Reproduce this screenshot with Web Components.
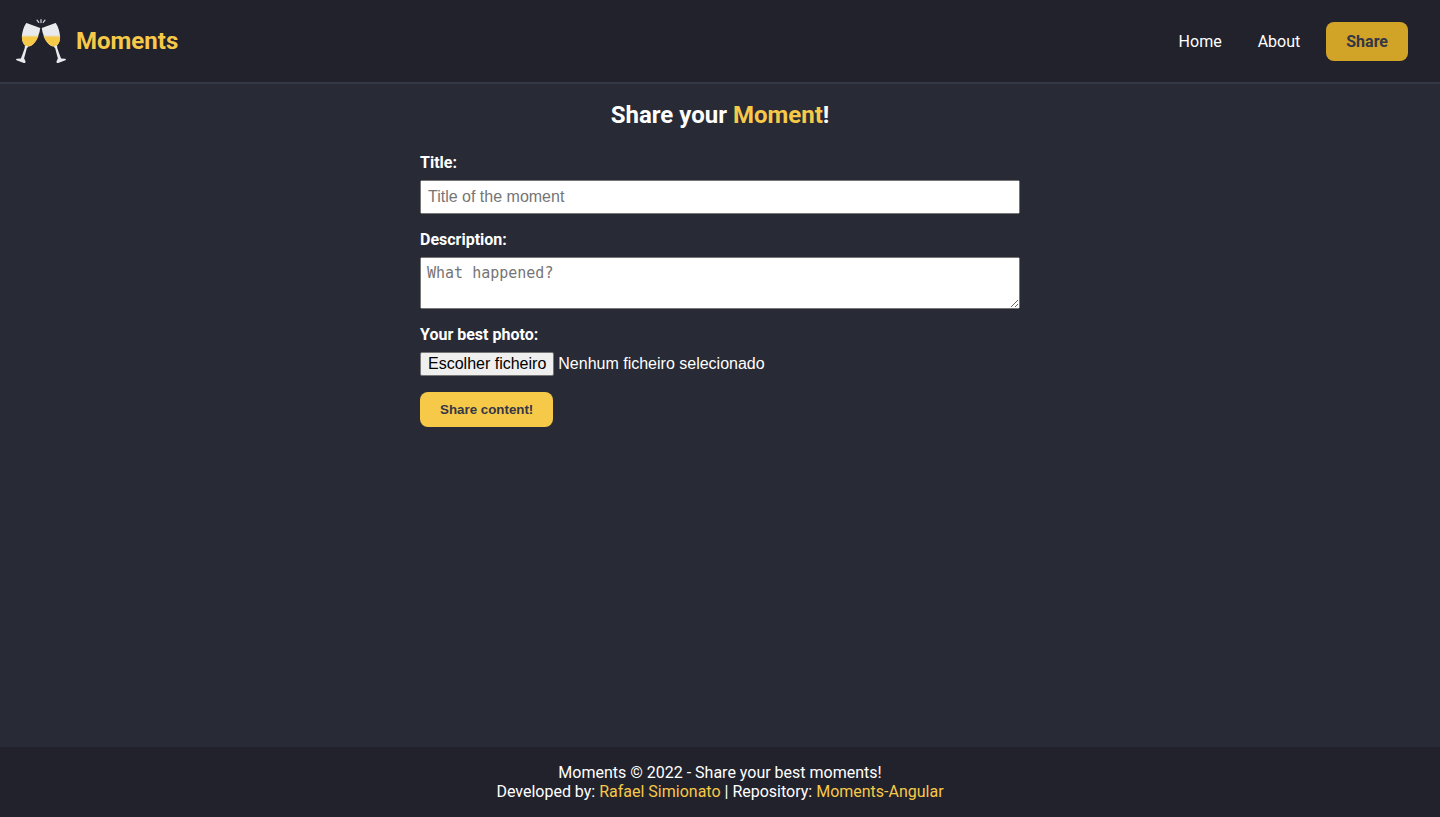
<!DOCTYPE html>
<html lang="en">
<head>
<meta charset="utf-8">
<meta name="viewport" content="width=device-width, initial-scale=1">
<title>Moments</title>
<style>
  :root {
    --bg: #282a35;
    --bar: #22222c;
    --line: #343746;
    --accent: #f7c948;
    --accent-dark: #d1a427;
    --ink: #343746;
    --text: #ffffff;
  }
  body {
    margin: 0;
    background: var(--bg);
    color: var(--text);
    font: 16px/19px Roboto, sans-serif;
  }
</style>
</head>
<body>
<moments-app></moments-app>

<template id="app-template">
  <style>
    :host { display: flex; flex-direction: column; min-height: 100vh; }
    main { flex: 1; padding: 16px; }
    h1 { margin: 0 0 23px; font-size: 24px; line-height: 30px; text-align: center; }
    h1 span { color: var(--accent); }
  </style>
  <moments-header></moments-header>
  <main>
    <h1>Share your <span>Moment</span>!</h1>
    <moment-form></moment-form>
  </main>
  <moments-footer></moments-footer>
</template>

<template id="header-template">
  <style>
    :host {
      display: flex; align-items: center; justify-content: space-between;
      padding: 16px 32px 16px 16px;
      background: var(--bar); border-bottom: 2px solid var(--line);
    }
    a { color: inherit; text-decoration: none; }
    .brand { display: flex; align-items: center; gap: 10px; color: var(--accent); font-size: 24px; font-weight: 700; line-height: 30px; }
    nav { display: flex; gap: 16px; }
    nav a { padding: 10px; }
    nav .share { padding: 10px 20px; border-radius: 8px; background: var(--accent-dark); color: var(--ink); font-weight: 700; }
  </style>
  <a class="brand" href="#home"><moments-logo></moments-logo>Moments</a>
  <nav>
    <a href="#home">Home</a>
    <a href="#about">About</a>
    <a class="share" href="#share">Share</a>
  </nav>
</template>

<template id="logo-template">
  <style>
    :host { display: block; width: 50px; height: 50px; }
    svg { display: block; width: 100%; height: 100%; }
  </style>
  <svg viewBox="0 0 50 50" aria-hidden="true">
    <defs>
      <g id="glass">
        <path d="M11.2 7.2 24.2 12C23.8 17 21.4 23.4 17.6 27.8 15.6 30 12.8 30.9 10.4 30 7.6 28.8 5.9 25.6 5.9 21.6 5.9 16.4 7.9 10.4 9.8 7.7 10.1 7.1 10.7 7 11.2 7.2Z" fill="#e9eaee"/>
        <path d="M5.9 20.4H22.3C21.2 23.1 19.6 25.6 17.6 27.8 15.6 30 12.8 30.9 10.4 30 7.6 28.8 5.9 25.6 5.9 20.4Z" fill="#f7c948"/>
        <path d="M6 19.8H22.5L22 21H5.9Z" fill="#efd38a"/>
        <path d="M8.8 29.3 12.6 30.6 10.8 32.2C9.9 35.8 8.8 39.6 8.1 42.3L9.6 45.8C9.4 46.9 8.7 47.2 7.8 46.9L.6 44.2C-.2 43.8 0 42.8 1 42.7L4.9 42.5C6.3 38.7 7.8 35 8.8 31.7Z" fill="#e9eaee"/>
      </g>
    </defs>
    <use href="#glass"/>
    <use href="#glass" transform="matrix(-1 0 0 1 50 0)"/>
    <path d="M25 3.6V6.6M21 4.2 22.8 6.3M29 4.2 27.2 6.3" fill="none" stroke="#d5d8de" stroke-width="1.2" stroke-linecap="round"/>
  </svg>
</template>

<template id="form-template">
  <style>
    :host { display: block; max-width: 600px; margin: 0 auto; }
    form { display: flex; flex-direction: column; align-items: flex-start; gap: 16px; }
    button {
      padding: 10px 20px; border: 0; border-radius: 8px;
      background: var(--accent); color: var(--ink);
      font-family: "Liberation Sans", Arial, sans-serif; font-weight: 700; cursor: pointer;
    }
  </style>
  <form>
    <text-field label="Title:" placeholder="Title of the moment"></text-field>
    <text-field label="Description:" placeholder="What happened?" multiline></text-field>
    <file-field label="Your best photo:" action="Escolher ficheiro" empty="Nenhum ficheiro selecionado"></file-field>
    <button type="submit">Share content!</button>
  </form>
</template>

<template id="footer-template">
  <style>
    :host { display: block; padding: 16px; background: var(--bar); text-align: center; }
    p { margin: 0; }
    a { color: var(--accent); text-decoration: none; }
  </style>
  <p>Moments © 2022 - Share your best moments!</p>
  <p>Developed by: <a href="#author">Rafael Simionato</a> | Repository: <a href="#repository">Moments-Angular</a></p>
</template>

<script>
  class TemplateElement extends HTMLElement {
    constructor() {
      super();
      const template = document.getElementById(this.constructor.templateId);
      this.attachShadow({ mode: "open" }).append(template.content.cloneNode(true));
    }
  }

  const fieldStyle = `
    :host { display: flex; flex-direction: column; align-items: flex-start; gap: 8px; width: 100%; }
    label { font-weight: 700; }
  `;

  class TextField extends HTMLElement {
    connectedCallback() {
      const control = document.createElement(this.hasAttribute("multiline") ? "textarea" : "input");
      control.id = "control";
      control.placeholder = this.getAttribute("placeholder");
      this.attachShadow({ mode: "open" }).innerHTML = `
        <style>${fieldStyle}
          input, textarea { display: block; box-sizing: border-box; width: 100%; margin: 0; padding: 6px; }
          input { height: 34px; font: 16px "Liberation Sans", Arial, sans-serif; }
          textarea { height: 52px; font: 15px/19px "DejaVu Sans Mono", monospace; }
        </style>
        <label for="control"></label>`;
      this.shadowRoot.querySelector("label").textContent = this.getAttribute("label");
      this.shadowRoot.append(control);
    }
  }

  class FileField extends HTMLElement {
    connectedCallback() {
      this.attachShadow({ mode: "open" }).innerHTML = `
        <style>${fieldStyle}
          .picker { position: relative; display: flex; align-items: center; gap: 4px; font: 16px/18px "Liberation Sans", Arial, sans-serif; }
          .action { padding: 2px 7px; border: 1px solid #767676; border-radius: 2px; background: #efefef; color: #000; }
          input { position: absolute; inset: 0; width: 100%; opacity: 0; font-size: 16px; }
        </style>
        <label for="control"></label>
        <div class="picker">
          <span class="action"></span><span class="name"></span>
          <input id="control" type="file" accept="image/*">
        </div>`;
      const find = selector => this.shadowRoot.querySelector(selector);
      find("label").textContent = this.getAttribute("label");
      find(".action").textContent = this.getAttribute("action");
      find(".name").textContent = this.getAttribute("empty");
      find("input").addEventListener("change", event => {
        const file = event.target.files[0];
        find(".name").textContent = file ? file.name : this.getAttribute("empty");
      });
    }
  }

  customElements.define("text-field", TextField);
  customElements.define("file-field", FileField);
  customElements.define("moments-logo", class extends TemplateElement { static templateId = "logo-template"; });
  customElements.define("moments-header", class extends TemplateElement { static templateId = "header-template"; });
  customElements.define("moment-form", class extends TemplateElement { static templateId = "form-template"; });
  customElements.define("moments-footer", class extends TemplateElement { static templateId = "footer-template"; });
  customElements.define("moments-app", class extends TemplateElement { static templateId = "app-template"; });
</script>
</body>
</html>
